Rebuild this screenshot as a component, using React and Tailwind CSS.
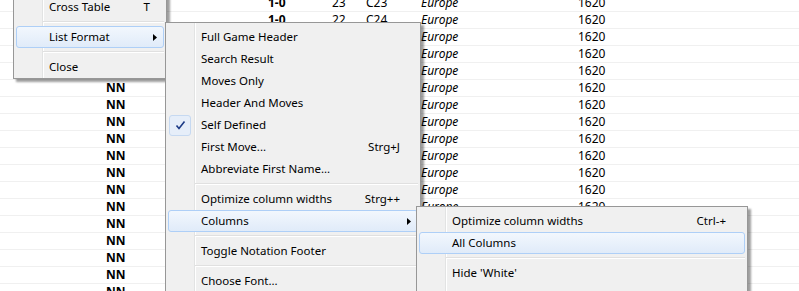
const rows = Array.from({ length: 18 }, (_, i) => ({
  name: 'NN',
  result: '1-0',
  moves: i === 0 ? '23' : i === 1 ? '22' : String(20 + ((i * 7) % 40)),
  eco: i === 0 ? 'C23' : i === 1 ? 'C24' : 'C2' + (i % 10),
  event: 'Europe',
  year: '1620',
}));

function Table() {
  return (
    <div className="mt-[-5px] text-[12px] text-black">
      {rows.map((r, i) => (
        <div key={i} className="flex h-[17px] items-center border-b border-[#f0f0f0]">
          <div className="w-[106px] shrink-0" />
          <div className="w-[162px] shrink-0 font-bold">{r.name}</div>
          <div className="w-[64px] shrink-0 font-bold">{r.result}</div>
          <div className="w-[34px] shrink-0">{r.moves}</div>
          <div className="w-[55px] shrink-0">{r.eco}</div>
          <div className="w-[157px] shrink-0 italic">{r.event}</div>
          <div className="shrink-0">{r.year}</div>
        </div>
      ))}
    </div>
  );
}

function Arrow() {
  return (
    <svg width="4" height="7" viewBox="0 0 4 7" className="block">
      <path d="M0 0 L4 3.5 L0 7 Z" fill="#000" />
    </svg>
  );
}

function Check() {
  return (
    <div className="absolute left-0 top-0 flex h-[21px] w-[22px] items-center justify-center rounded-[3px] border border-[#c6d9f1] bg-[#e6eef9]">
      <svg width="11" height="11" viewBox="0 0 11 11">
        <path d="M1.5 5.5 L4 8.5 L9.5 1.5" fill="none" stroke="#1c3a86" strokeWidth="1.6" />
      </svg>
    </div>
  );
}

function Item({ label, shortcut, sub, active, checked, pr = 'pr-[17px]' }) {
  return (
    <div
      className={
        'relative flex h-[22px] items-center rounded-[3px] border pl-[32px] ' +
        pr +
        (active
          ? ' border-[#aecff7] bg-[linear-gradient(to_bottom,#f2f7fd,#e0ebf9)]'
          : ' border-transparent')
      }
    >
      {checked && <Check />}
      <span className="whitespace-nowrap">{label}</span>
      {shortcut && <span className="ml-auto whitespace-nowrap">{shortcut}</span>}
      {sub && (
        <span className="ml-auto">
          <Arrow />
        </span>
      )}
    </div>
  );
}

function Sep() {
  return (
    <div className="flex h-[8px] items-center pl-[27px]">
      <div className="h-[2px] w-full border-t border-[#e0e0e0] border-b-white border-b" />
    </div>
  );
}

const menuBase =
  'absolute border border-[#979797] px-[2px] text-[11.5px] text-black shadow-[3px_3px_2px_rgba(0,0,0,0.38)] bg-[linear-gradient(to_right,#f0f0f0_28px,#e2e3e3_28px,#e2e3e3_29px,#ffffff_29px,#ffffff_30px,#f0f0f0_30px)]';

export default function App() {
  return (
    <div
      className="relative h-[291px] w-[799px] overflow-hidden bg-white"
      style={{ fontFamily: '"Noto Sans", "Open Sans", sans-serif' }}
    >
      <Table />

      <div className={menuBase + ' left-[13px] top-[-29px] w-[154px] pt-[2px] pb-0'}>
        <Item label="Statistics" pr="pr-[13px]" />
        <Item label="Cross Table" shortcut="T" pr="pr-[13px]" />
        <Sep />
        <Item label="List Format" sub active pr="pr-[6px]" />
        <Sep />
        <Item label="Close" pr="pr-[13px]" />
      </div>

      <div className={menuBase + ' left-[165px] top-[22px] w-[256px] pt-[3px] pb-[3px]'}>
        <Item label="Full Game Header" />
        <Item label="Search Result" />
        <Item label="Moves Only" />
        <Item label="Header And Moves" />
        <Item label="Self Defined" checked />
        <Item label="First Move..." shortcut="Strg+J" />
        <Item label="Abbreviate First Name..." />
        <Sep />
        <Item label="Optimize column widths" shortcut="Strg++" />
        <Item label="Columns" sub active pr="pr-[6px]" />
        <Sep />
        <Item label="Toggle Notation Footer" />
        <Sep />
        <Item label="Choose Font..." />
      </div>

      <div className={menuBase + ' left-[416px] top-[206px] w-[332px] pt-[3px] pb-[3px]'}>
        <Item label="Optimize column widths" shortcut="Ctrl-+" pr="pr-[18px]" />
        <Item label="All Columns" active />
        <Sep />
        <Item label="Hide 'White'" />
        <Item label="Auto Fit Column 'White'" />
      </div>
    </div>
  );
}
